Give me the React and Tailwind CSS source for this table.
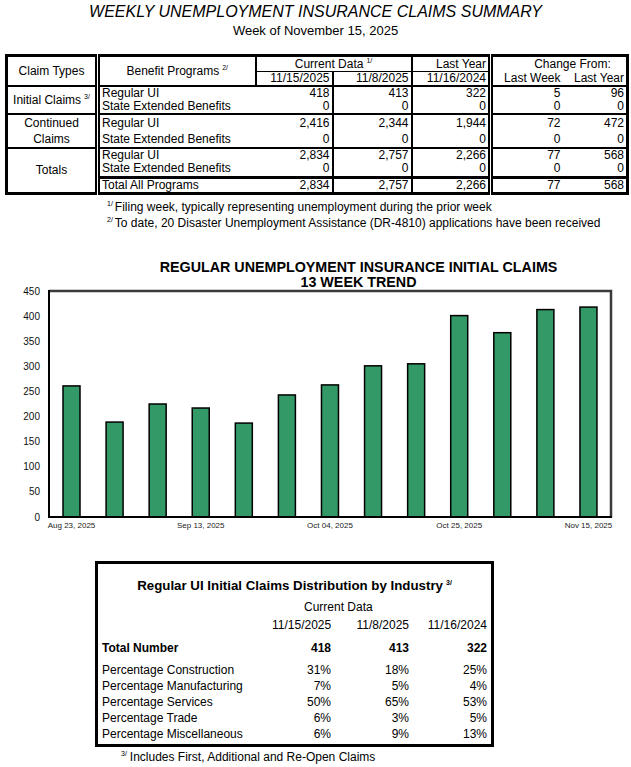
const bars = [261, 189, 225, 217, 187, 243, 263, 301, 305, 401, 367, 413, 418];
const xLabels = { 0: "Aug 23, 2025", 3: "Sep 13, 2025", 6: "Oct 04, 2025", 9: "Oct 25, 2025", 12: "Nov 15, 2025" };

const industry = [
  ["Percentage Construction", "31%", "18%", "25%"],
  ["Percentage Manufacturing", "7%", "5%", "4%"],
  ["Percentage Services", "50%", "65%", "53%"],
  ["Percentage Trade", "6%", "3%", "5%"],
  ["Percentage Miscellaneous", "6%", "9%", "13%"],
];

function Sup({ children, className = "" }) {
  return <sup className={`text-[7px] -top-[5px] ml-[3px] ${className}`}>{children}</sup>;
}

// column separators
const c1 = "border-r-[5px] [border-right-style:double] border-black";
const c2 = "border-r-2 border-black";
const c3 = "border-r-2 border-black";
const c4 = "border-r-2 border-black";
const c5 = "border-r-[5px] [border-right-style:double] border-black";
const num = "text-right pr-[2px]";

function DataRow({ label, vals, h, bottom = "", first }) {
  return (
    <tr className={h}>
      {first}
      <td className={`border-l-[5px] [border-left-style:double] border-black pl-[2px] ${bottom}`}>{label}</td>
      <td className={`${c3} ${num} ${bottom}`}>{vals[0]}</td>
      <td className={`${c4} ${num} ${bottom}`}>{vals[1]}</td>
      <td className={`${c5} ${num} ${bottom}`}>{vals[2]}</td>
      <td className={`${num} pr-[3px] ${bottom}`}>{vals[3]}</td>
      <td className={`${num} pr-[1px] ${bottom}`}>{vals[4]}</td>
    </tr>
  );
}

function Chart() {
  const y0 = 519;
  const k = 226 / 450;
  return (
    <svg width="631" height="246" viewBox="0 292 631 246" className="block overflow-visible">
      {[0, 50, 100, 150, 200, 250, 300, 350, 400, 450].map((v) => (
        <text key={v} x="40" y={y0 - v * k + 3.5} fontSize="10" textAnchor="end" fill="#111" fontFamily="Liberation Sans, Arial, sans-serif">
          {v}
        </text>
      ))}
      <path d="M49 293 H611 V519" fill="none" stroke="#3a3a3a" strokeWidth="2.5" />
      {bars.map((v, i) => {
        const x = 63 + i * 43.08;
        const top = y0 - v * k;
        return <rect key={i} x={x} y={top} width="17" height={y0 - top} fill="#339966" stroke="#000" strokeWidth="1.5" />;
      })}
      <path d="M49 292 V519 H612" fill="none" stroke="#000" strokeWidth="2" />
      {Object.entries(xLabels).map(([i, t]) => (
        <text key={i} x={63 + i * 43.08 + 8.5} y="530" fontSize="8" textAnchor="middle" fill="#222" fontFamily="Liberation Sans, Arial, sans-serif">
          {t}
        </text>
      ))}
    </svg>
  );
}

export default function App() {
  return (
    <div className="w-[631px] h-[767px] overflow-hidden bg-white text-black font-['Liberation_Sans',Arial,sans-serif]">
      <div className="pt-[3px] text-center italic text-[16px] leading-[18px]">WEEKLY UNEMPLOYMENT INSURANCE CLAIMS SUMMARY</div>
      <div className="mt-[2px] text-center text-[13px] leading-[15px]">Week of November 15, 2025</div>

      <table className="mt-[16px] ml-[5px] w-[621px] table-fixed border-collapse border-[3px] border-black text-[12px] leading-[13px]">
        <colgroup>
          <col className="w-[91px]" />
          <col className="w-[158px]" />
          <col className="w-[77px]" />
          <col className="w-[79px]" />
          <col className="w-[79px]" />
          <col className="w-[73px]" />
          <col className="w-[64px]" />
        </colgroup>
        <tbody>
          <tr className="h-[16px]">
            <td rowSpan={2} className={`${c1} text-center border-b-2`}>Claim Types</td>
            <td rowSpan={2} className={`${c2} text-center border-b-2`}>
              Benefit Programs<Sup>2/</Sup>
            </td>
            <td colSpan={2} className={`${c4} text-center border-b`}>
              Current Data<Sup>1/</Sup>
            </td>
            <td className={`${c5} text-right pr-[2px] border-b`}>Last Year</td>
            <td colSpan={2} className="text-center pl-[26px]">Change From:</td>
          </tr>
          <tr className="h-[14px]">
            <td className={`${c3} ${num} border-b-2`}>11/15/2025</td>
            <td className={`${c4} ${num} border-b-2`}>11/8/2025</td>
            <td className={`${c5} ${num} border-b-2`}>11/16/2024</td>
            <td className={`${num} pr-[3px] border-b-2`}>Last Week</td>
            <td className={`${num} pr-[1px] border-b-2`}>Last Year</td>
          </tr>

          <DataRow
            h="h-[14px]"
            label="Regular UI"
            vals={["418", "413", "322", "5", "96"]}
            first={
              <td rowSpan={2} className={`${c1} text-center border-b-2 whitespace-nowrap`}>
                Initial Claims<Sup>3/</Sup>
              </td>
            }
          />
          <DataRow h="h-[14px]" label="State Extended Benefits" vals={["0", "0", "0", "0", "0"]} bottom="border-b-2" />

          <DataRow
            h="h-[17px]"
            label="Regular UI"
            vals={["2,416", "2,344", "1,944", "72", "472"]}
            first={
              <td rowSpan={2} className={`${c1} text-center leading-[16px] border-b-2`}>
                Continued
                <br />
                Claims
              </td>
            }
          />
          <DataRow h="h-[16px]" label="State Extended Benefits" vals={["0", "0", "0", "0", "0"]} bottom="border-b-2" />

          <DataRow
            h="h-[14px]"
            label="Regular UI"
            vals={["2,834", "2,757", "2,266", "77", "568"]}
            first={
              <td rowSpan={3} className={`${c1} text-center`}>
                Totals
              </td>
            }
          />
          <DataRow h="h-[15px]" label="State Extended Benefits" vals={["0", "0", "0", "0", "0"]} bottom="border-b-[3px]" />
          <DataRow h="h-[16px]" label="Total All Programs" vals={["2,834", "2,757", "2,266", "77", "568"]} />
        </tbody>
      </table>

      <div className="mt-[4px] pl-[107px] text-[12px] leading-[16px]">
        <div>
          <sup className="text-[7px] -top-[5px] mr-[2px]">1/</sup>Filing week, typically representing unemployment during the prior week
        </div>
        <div>
          <sup className="text-[7px] -top-[5px] mr-[2px]">2/</sup>To date, 20 Disaster Unemployment Assistance (DR-4810) applications have been received
        </div>
      </div>

      <div className="mt-[29px] pl-[86px] text-center font-bold text-[14.3px] leading-[15px]">
        REGULAR UNEMPLOYMENT INSURANCE INITIAL CLAIMS
        <br />
        13 WEEK TREND
      </div>

      <Chart />

      <div className="mt-[25px] ml-[95px] w-[399px] border-[3px] border-black px-[4px] pt-[14px] pb-[2px] text-[12px] leading-[16px]">
        <div className="text-center font-bold text-[13.3px]">
          Regular UI Initial Claims Distribution by Industry<Sup>3/</Sup>
        </div>
        <div className="mt-[5px] pl-[202px]">Current Data</div>
        <div className="mt-[2px] grid grid-cols-[170px_59px_78px_78px]">
          <div />
          <div className="text-right">11/15/2025</div>
          <div className="text-right">11/8/2025</div>
          <div className="text-right">11/16/2024</div>
        </div>
        <div className="mt-[7px] grid grid-cols-[170px_59px_78px_78px] font-bold">
          <div>Total Number</div>
          <div className="text-right">418</div>
          <div className="text-right">413</div>
          <div className="text-right">322</div>
        </div>
        <div className="mt-[6px]">
          {industry.map((r) => (
            <div key={r[0]} className="grid grid-cols-[170px_59px_78px_78px]">
              <div>{r[0]}</div>
              <div className="text-right">{r[1]}</div>
              <div className="text-right">{r[2]}</div>
              <div className="text-right">{r[3]}</div>
            </div>
          ))}
        </div>
      </div>
      <div className="mt-[2px] pl-[121px] text-[12px] leading-[16px]">
        <sup className="text-[7px] -top-[5px] mr-[3px]">3/</sup>Includes First, Additional and Re-Open Claims
      </div>
    </div>
  );
}
